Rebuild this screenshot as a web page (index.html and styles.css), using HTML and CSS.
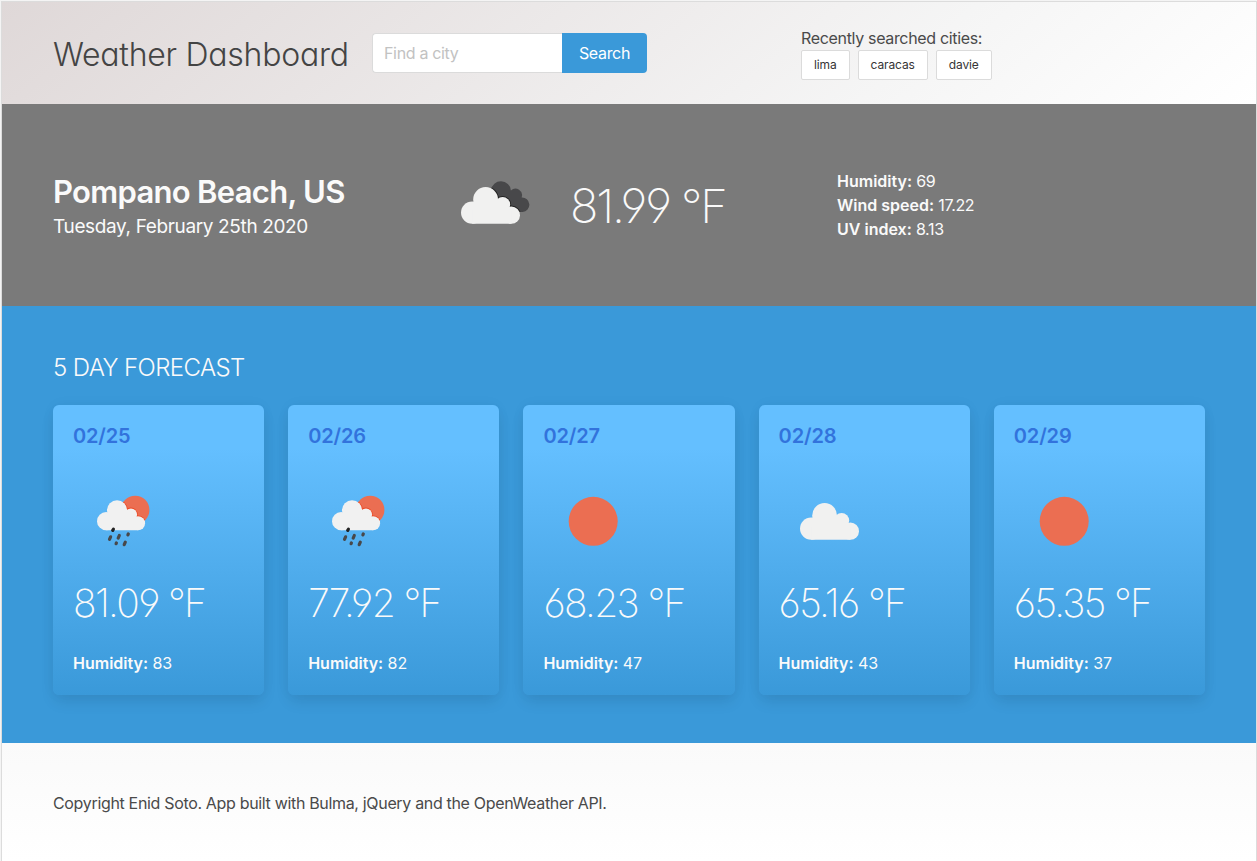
FILE: index.html
```html
<!DOCTYPE html>
<html lang="en">
<head>
<meta charset="utf-8">
<title>Weather Dashboard</title>
<link rel="stylesheet" href="styles.css">
</head>
<body>
<svg class="defs" aria-hidden="true">
  <defs>
    <g id="cloud">
      <circle cx="32.2" cy="57.6" r="11.2"/>
      <circle cx="45.6" cy="44.5" r="12.4"/>
      <circle cx="62.6" cy="49.6" r="7.6"/>
      <circle cx="71.4" cy="60.2" r="8.6"/>
      <path d="M32.2 68.8V48H62.6L71.4 56V68.8Z"/>
    </g>
    <symbol id="sun" viewBox="0 0 100 100"><circle cx="50.2" cy="50.3" r="24.5" fill="#eb6e52"/></symbol>
    <symbol id="cloudy" viewBox="0 0 100 100"><use href="#cloud" fill="#f1f1f0"/></symbol>
    <symbol id="clouds" viewBox="0 0 100 100">
      <path d="M51 35A10 10 0 0 1 70.9 35.4A6.6 6.6 0 0 1 81.6 42.5A7.25 7.25 0 1 1 82.6 57H70L52 42Z" fill="#48484a"/>
      <clipPath id="back"><path d="M51 35A10 10 0 0 1 70.9 35.4A6.6 6.6 0 0 1 81.6 42.5A7.25 7.25 0 1 1 82.6 57H70L52 42Z"/></clipPath>
      <g clip-path="url(#back)"><use href="#cloud" fill="#222" stroke="#222" stroke-width="2"/></g>
      <use href="#cloud" fill="#f1f1f0"/>
    </symbol>
    <symbol id="rain" viewBox="0 0 100 100">
      <clipPath id="disc"><circle cx="62.2" cy="38.9" r="14.2"/></clipPath>
      <circle cx="62.2" cy="38.9" r="14.2" fill="#eb6e52"/>
      <g clip-path="url(#disc)"><use href="#cloud" transform="translate(6.9 3.2) scale(.815)" fill="#ec4a26" stroke="#ec4a26" stroke-width="2"/></g>
      <use href="#cloud" transform="translate(6.9 3.2) scale(.815)" fill="#f1f1f1"/>
      <g stroke="#48484a" stroke-width="3.2" stroke-linecap="round">
        <path d="M40.4 58.2l-.7 1.2" stroke="#222"/>
        <path d="M37.6 65.8l-1.1 2.6M46.3 64.5l-1.1 2.6M52.3 71.1l-1.1 2.6M55.3 62.9l-.4 1M43.4 71.9l-.3 .8"/>
      </g>
    </symbol>
  </defs>
</svg>
<div class="page">
  <header class="header">
    <h1 class="brand">Weather Dashboard</h1>
    <form class="search">
      <input class="search-input" type="text" placeholder="Find a city">
      <button class="search-button" type="button">Search</button>
    </form>
    <div class="recent">
      <p class="recent-label">Recently searched cities:</p>
      <div class="recent-list">
        <button class="city" type="button">lima</button>
        <button class="city" type="button">caracas</button>
        <button class="city" type="button">davie</button>
      </div>
    </div>
  </header>
  <section class="current">
    <div class="place">
      <h2 class="place-name">Pompano Beach, US</h2>
      <p class="place-date">Tuesday, February 25th 2020</p>
    </div>
    <div class="now">
      <svg class="icon"><use href="#clouds"/></svg>
      <p class="now-temp">81.99 °F</p>
    </div>
    <div class="details">
      <p><strong>Humidity:</strong> 69</p>
      <p><strong>Wind speed:</strong> 17.22</p>
      <p><strong>UV index:</strong> 8.13</p>
    </div>
  </section>
  <section class="forecast">
    <h2 class="forecast-title">5 DAY FORECAST</h2>
    <div class="cards">
      <article class="card"><h3 class="date">02/25</h3><svg class="icon"><use href="#rain"/></svg><p class="temp">81.09 °F</p><p class="humidity"><strong>Humidity:</strong> 83</p></article>
      <article class="card"><h3 class="date">02/26</h3><svg class="icon"><use href="#rain"/></svg><p class="temp">77.92 °F</p><p class="humidity"><strong>Humidity:</strong> 82</p></article>
      <article class="card"><h3 class="date">02/27</h3><svg class="icon"><use href="#sun"/></svg><p class="temp">68.23 °F</p><p class="humidity"><strong>Humidity:</strong> 47</p></article>
      <article class="card"><h3 class="date">02/28</h3><svg class="icon"><use href="#cloudy"/></svg><p class="temp">65.16 °F</p><p class="humidity"><strong>Humidity:</strong> 43</p></article>
      <article class="card"><h3 class="date">02/29</h3><svg class="icon"><use href="#sun"/></svg><p class="temp">65.35 °F</p><p class="humidity"><strong>Humidity:</strong> 37</p></article>
    </div>
  </section>
  <footer class="footer">
    <p class="copyright">Copyright Enid Soto. App built with Bulma, jQuery and the OpenWeather API.</p>
  </footer>
</div>
</body>
</html>
```

FILE: styles.css
```css
* { box-sizing: border-box; margin: 0; padding: 0; }
body {
  background: #f4f4f4;
  padding: 1px 0 0 1px;
  height: 861px;
  overflow: hidden;
  font: 16px/24px Inter, "Liberation Sans", sans-serif;
  letter-spacing: -0.33px;
  color: #4a4a4a;
}
.defs { position: absolute; width: 0; height: 0; }
.page {
  height: 860px;
  border: 1px solid #dcdcdc;
  border-bottom: 0;
  display: flex;
  flex-direction: column;
}
strong { font-weight: 600; letter-spacing: 0; }
.header {
  flex: none;
  height: 102px;
  padding: 0 51px;
  display: flex;
  align-items: center;
  background: linear-gradient(141deg, #dfd8d8 0%, #f5f5f5 71%, #fff 100%);
}
.brand {
  width: 319px;
  padding-top: 3px;
  white-space: nowrap;
  font-size: 32px;
  line-height: 36px;
  font-weight: 350;
  letter-spacing: -0.25px;
  font-feature-settings: "cv11" 1;
  color: #444;
}
.search { display: flex; width: 275px; height: 40px; }
.search-input {
  width: 190px;
  border: 1px solid #dbdbdb;
  border-right: 0;
  border-radius: 4px 0 0 4px;
  padding: 0 11px;
  background: #fff;
  font: inherit;
  letter-spacing: inherit;
}
.search-input::placeholder { color: #c2c2c2; }
.search-button {
  flex: 1;
  border: 0;
  border-radius: 0 4px 4px 0;
  background: #3a99d9;
  color: #fff;
  font: inherit;
  letter-spacing: inherit;
}
.recent { margin-left: 154px; }
.recent-list { display: flex; gap: 8px; }
.city {
  height: 30px;
  padding: 0 12px;
  border: 1px solid #dbdbdb;
  border-radius: 2px;
  background: #fff;
  font: 12px/18px Inter, sans-serif;
  letter-spacing: -0.12px;
  color: #363636;
}
.current {
  flex: none;
  height: 202px;
  padding: 0 51px;
  display: flex;
  align-items: center;
  background: #7a7a7a;
  color: #fafafa;
}
.place { width: 387px; padding-top: 6px; white-space: nowrap; }
.place-name { font-size: 31px; line-height: 36px; font-weight: 600; letter-spacing: -0.7px; }
.place-date { font-size: 19px; line-height: 30px; margin-top: 2px; letter-spacing: -0.36px; }
.icon { display: block; width: 100px; height: 100px; }
.now { display: flex; align-items: center; width: 397px; gap: 30px; }
.now-temp { padding-top: 2px; font-size: 47px; line-height: 60px; font-weight: 200; letter-spacing: -2.1px; white-space: nowrap; }
.now-temp, .temp { font-feature-settings: "cv03" 1, "cv04" 1; }
.details { white-space: nowrap; }
.forecast {
  flex: none;
  height: 437px;
  padding: 46px 51px 48px;
  background: #3a99d9;
  color: #fafafa;
}
.forecast-title { font-size: 24px; line-height: 32px; font-weight: 300; letter-spacing: -0.6px; white-space: nowrap; }
.cards { display: grid; grid-template-columns: repeat(5, 1fr); gap: 24px; margin-top: 21px; }
.card {
  height: 290px;
  padding: 20px;
  border-radius: 6px;
  background: linear-gradient(180deg, #64bfff 15%, #3a99d9 100%);
  box-shadow: 0 8px 16px -2px rgba(10,10,10,.09), 0 0 16px rgba(10,10,10,.03);
}
.date { font-size: 20px; line-height: 22px; font-weight: 600; letter-spacing: -0.15px; color: #3273dc; }
.card .icon { margin-top: 24px; }
.temp { margin-top: 8px; font-size: 39px; line-height: 48px; font-weight: 200; letter-spacing: -1.65px; white-space: nowrap; }
.humidity { margin-top: 24px; letter-spacing: -0.1px; }
.footer {
  flex: 1;
  padding: 48px 51px 0;
  background: linear-gradient(180deg, #fafafa, #fff);
}
```
